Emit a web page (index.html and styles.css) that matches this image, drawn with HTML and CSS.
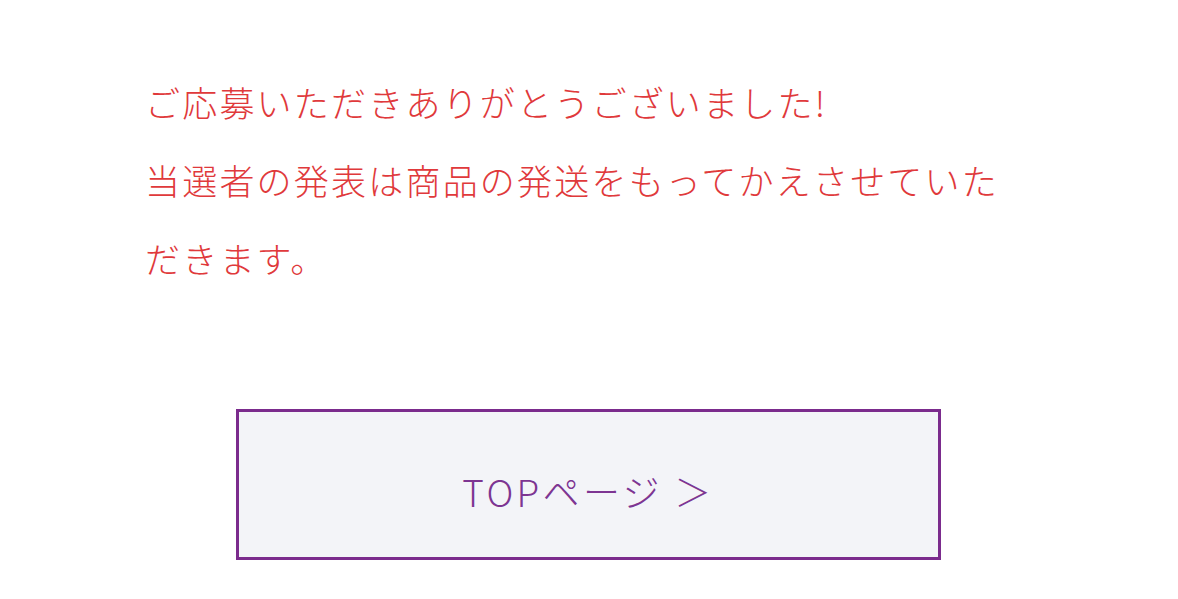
FILE: index.html
```html
<!DOCTYPE html>
<html lang="ja">
<head>
    <meta charset="UTF-8">
    <meta name="viewport" content="width=device-width, initial-scale=1.0">
    <title>応募完了</title>
    <link rel="stylesheet" href="styles.css">
</head>
<body>
    <main class="thanks">
        <p class="thanks-message">
            ご応募いただきありがとうございました!<br>
            当選者の発表は商品の発送をもってかえさせていただきます。
        </p>
        <a class="top-btn" href="#">TOPページ ＞</a>
    </main>
</body>
</html>
```

FILE: styles.css
```css
body {
    margin: 0;
    background-color: #fff;
    font-family: "Noto Sans CJK JP", "Noto Sans", sans-serif;
    font-weight: 300;
}

.thanks {
    width: 870px;
    padding: 63px 0 0 145px;
}

.thanks-message {
    margin: 0;
    color: #e0393b;
    font-size: 35px;
    line-height: 78px;
    letter-spacing: 0.063em;
}

.top-btn {
    display: flex;
    justify-content: center;
    align-items: center;
    box-sizing: border-box;
    width: 705px;
    height: 151px;
    margin: 112px 0 0 91px;
    padding-top: 12px;
    border: 3px solid #7b2b8d;
    background-color: #f3f4f8;
    color: #7d3592;
    font-size: 37px;
    letter-spacing: 0.09em;
    text-decoration: none;
}
```
